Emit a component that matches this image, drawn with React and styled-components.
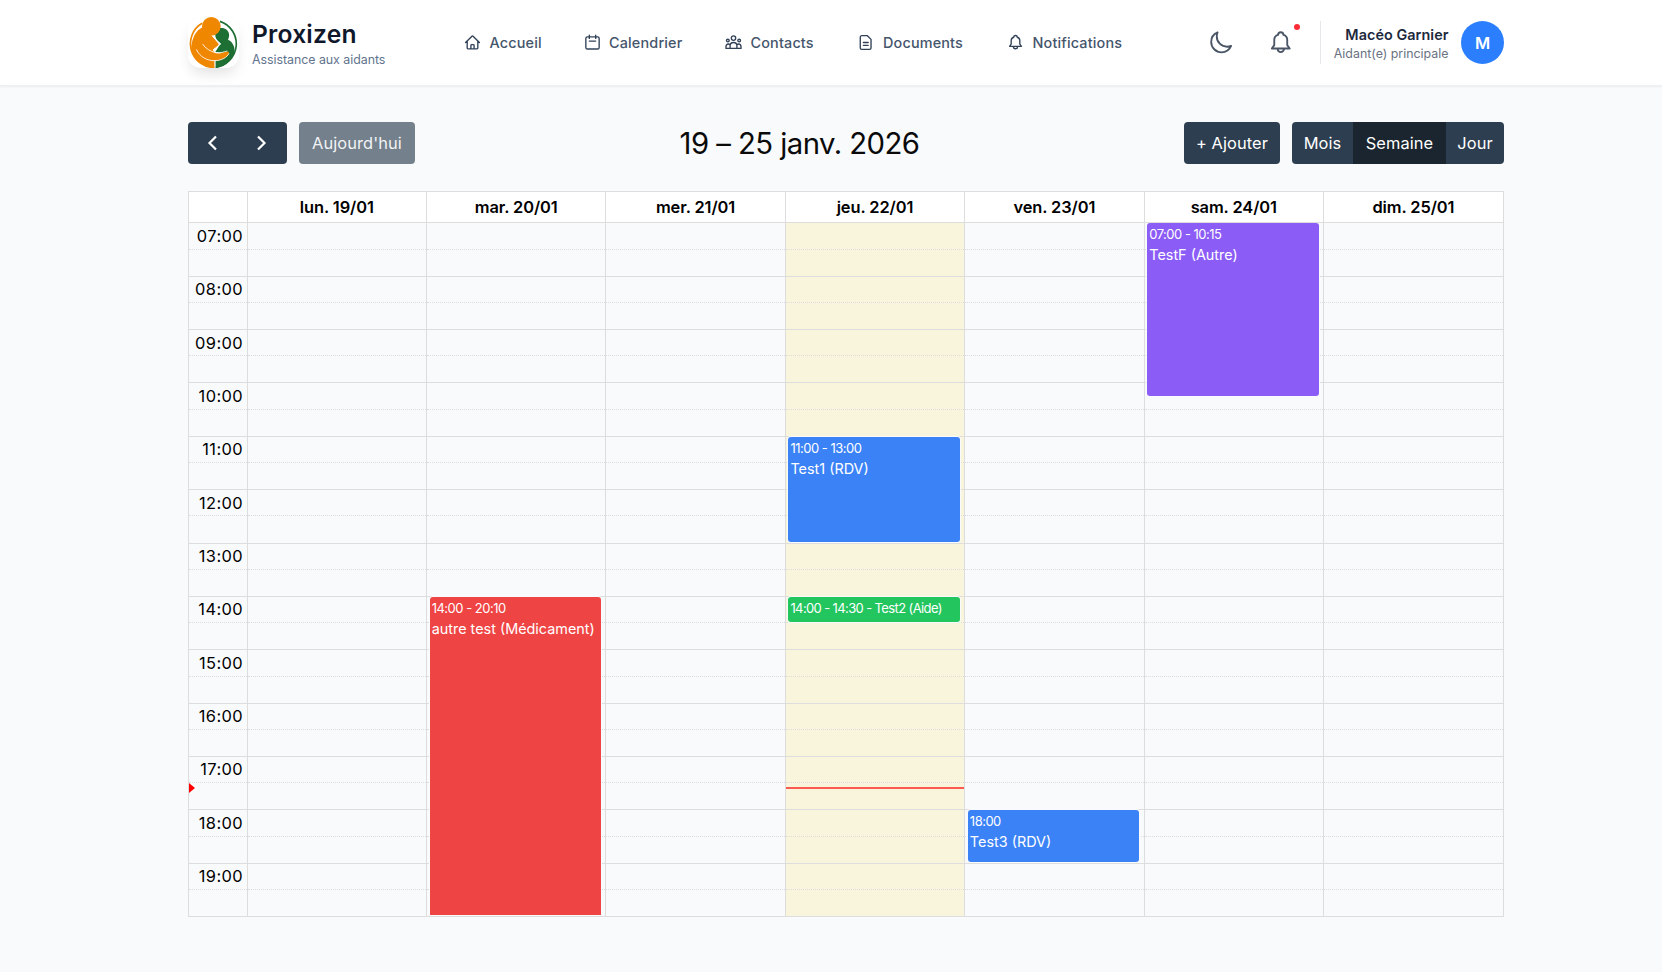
import styled, { createGlobalStyle } from "styled-components"
import { HiOutlineHome, HiOutlineMoon } from "react-icons/hi2"

const START_HOUR = 7
const END_HOUR = 20
const HOUR_HEIGHT = 53.36

const navItems = [
    { label: "Accueil", icon: HiOutlineHome, width: 119.5 },
    { label: "Calendrier", icon: CalendarIcon, width: 141.5 },
    { label: "Contacts", icon: GroupIcon, width: 132.5 },
    { label: "Documents", icon: DocumentIcon, width: 149.5 },
    { label: "Notifications", icon: BellIcon, width: 120 },
]

const days = [
    { label: "lun. 19/01", events: [] },
    {
        label: "mar. 20/01",
        events: [{ start: 14, end: 19.99, time: "14:00 - 20:10", title: "autre test (Médicament)", color: "#ef4444", cut: true }],
    },
    { label: "mer. 21/01", events: [] },
    {
        label: "jeu. 22/01",
        today: true,
        events: [
            { start: 11, end: 13, time: "11:00 - 13:00", title: "Test1 (RDV)", color: "#3b82f6" },
            { start: 14, end: 14.5, time: "14:00 - 14:30", title: "Test2 (Aide)", color: "#22c55e", short: true },
        ],
    },
    {
        label: "ven. 23/01",
        events: [{ start: 18, end: 19, time: "18:00", title: "Test3 (RDV)", color: "#3b82f6" }],
    },
    {
        label: "sam. 24/01",
        events: [{ start: 7, end: 10.25, time: "07:00 - 10:15", title: "TestF (Autre)", color: "#8b5cf6" }],
    },
    { label: "dim. 25/01", events: [] },
]

const hours = Array.from({ length: END_HOUR - START_HOUR }, (_, i) => START_HOUR + i)
const now = 17.57

const toY = (hour) => (hour - START_HOUR) * HOUR_HEIGHT

export default function App() {
    return (
        <>
            <GlobalStyle />
            <Header />
            <Main>
                <Toolbar />
                <WeekView />
            </Main>
        </>
    )
}

function Header() {
    return (
        <Topbar>
            <Brand>
                <LogoBox>
                    <Logo />
                </LogoBox>
                <div>
                    <BrandName>Proxizen</BrandName>
                    <BrandTag>Assistance aux aidants</BrandTag>
                </div>
            </Brand>
            <Nav>
                {navItems.map(({ label, icon: Icon, width }) => (
                    <NavItem key={label} $width={width}>
                        <Icon />
                        {label}
                    </NavItem>
                ))}
            </Nav>
            <IconButton>
                <HiOutlineMoon />
            </IconButton>
            <IconButton>
                <BellIcon />
                <Dot />
            </IconButton>
            <User>
                <div>
                    <UserName>Macéo Garnier</UserName>
                    <UserRole>Aidant(e) principale</UserRole>
                </div>
                <Avatar>M</Avatar>
            </User>
        </Topbar>
    )
}

function Toolbar() {
    return (
        <Tools>
            <ToolGroup>
                <Arrows>
                    <Chevron d="M10 2.5 L3.5 9 L10 15.5" />
                    <Chevron d="M3 2.5 L9.5 9 L3 15.5" />
                </Arrows>
                <Button $width={116} $disabled>Aujourd'hui</Button>
            </ToolGroup>
            <Title>19 – 25 janv. 2026</Title>
            <ToolGroup>
                <Button $width={96}>+ Ajouter</Button>
                <Segments>
                    <Segment $width={61}>Mois</Segment>
                    <Segment $width={93} $active>Semaine</Segment>
                    <Segment $width={58}>Jour</Segment>
                </Segments>
            </ToolGroup>
        </Tools>
    )
}

function WeekView() {
    return (
        <Calendar>
            <HeadRow>
                <HeadCell />
                {days.map((day) => (
                    <HeadCell key={day.label}>{day.label}</HeadCell>
                ))}
            </HeadRow>
            <Body>
                <Column>
                    {hours.map((hour) => (
                        <Hour key={hour}>
                            <HourLabel>{String(hour).padStart(2, "0")}:00</HourLabel>
                        </Hour>
                    ))}
                    <NowArrow style={{ top: toY(now) }} />
                </Column>
                {days.map((day) => (
                    <Column key={day.label} $today={day.today}>
                        {hours.map((hour) => (
                            <Hour key={hour} />
                        ))}
                        {day.events.map((event) => (
                            <Event
                                key={event.title}
                                $color={event.color}
                                $cut={event.cut}
                                style={{ top: toY(event.start) + 0.3, height: toY(event.end) - toY(event.start) - 1.2 }}
                            >
                                <EventTime $short={event.short}>
                                    {event.short ? `${event.time} - ${event.title}` : event.time}
                                </EventTime>
                                {!event.short && <EventTitle>{event.title}</EventTitle>}
                            </Event>
                        ))}
                        {day.today && <NowLine style={{ top: toY(now) }} />}
                    </Column>
                ))}
            </Body>
        </Calendar>
    )
}

function Chevron({ d }) {
    return (
        <svg width="14" height="18" viewBox="0 0 14 18" fill="none" stroke="white" strokeWidth="2.2">
            <path d={d} />
        </svg>
    )
}

function CalendarIcon() {
    return (
        <svg viewBox="0 0 24 24" fill="none" stroke="currentColor" strokeLinecap="round">
            <rect x="2.6" y="4" width="18.8" height="17.2" rx="2.2" />
            <path d="M7.5 1.8v4.4M16.5 1.8v4.4M7.5 10h9" />
        </svg>
    )
}

function GroupIcon() {
    return (
        <svg viewBox="0 0 24 24" fill="none" stroke="currentColor" strokeLinejoin="round">
            <circle cx="12" cy="5.8" r="3.1" />
            <circle cx="4" cy="9.3" r="1.9" />
            <circle cx="20" cy="9.3" r="1.9" />
            <path d="M7.2 20.4v-3.6a4.8 4.8 0 0 1 9.6 0v3.6z" />
            <path d="M7.2 20.4H1.4v-2.6c0-2.2 1.4-3.7 3.2-3.7 1 0 1.9.3 2.6 1.1" />
            <path d="M16.8 20.4h5.8v-2.6c0-2.2-1.4-3.7-3.2-3.7-1 0-1.9.3-2.6 1.1" />
        </svg>
    )
}

function DocumentIcon() {
    return (
        <svg viewBox="0 0 24 24" fill="none" stroke="currentColor" strokeLinecap="round" strokeLinejoin="round">
            <path d="M5.2 2.4h8l5.2 5.2v12a2 2 0 0 1-2 2H5.2a2 2 0 0 1-2-2V4.4a2 2 0 0 1 2-2z" />
            <path d="M7.6 12h6.8M7.6 16h6.8" />
        </svg>
    )
}

function BellIcon() {
    return (
        <svg viewBox="0 0 24 24" fill="none" stroke="currentColor" strokeLinejoin="round">
            <path d="M3.6 17.4h16.8l-2.3-3.2V9.4a4.9 4.9 0 0 0-3.6-4.8 2.5 2.5 0 0 0-5 0 4.9 4.9 0 0 0-3.6 4.8v4.8z" />
            <path d="M9 17.6a3 3.2 0 0 0 6 0" />
        </svg>
    )
}

function Logo() {
    return (
        <svg width="51" height="51" viewBox="24 51 153 153" fill="none">
            <path d="M120 64 A71 71 0 0 1 106 202" stroke="#1d6f33" strokeWidth="5" />
            <path d="M66 70 A71 71 0 0 0 104 202" stroke="#f08700" strokeWidth="5" />
            <path
                fill="#1d6f33"
                d="M106 98 C108 84 126 80 138 88 C150 97 149 110 144 119 C160 126 166 144 163 160 C152 186 130 202 106 204 L106 176 L132 158 L106 156 L122 130 C112 126 104 112 106 98 Z"
            />
            <path
                fill="#f08700"
                d="M68 82 C46 92 35 116 33 150 C42 184 72 204 104 204 L104 183 C122 182 146 172 147 158 C144 150 132 158 120 160 L106 159 L98 150 C108 142 116 138 116 132 L96 108 Z"
            />
            <circle cx="94" cy="79" r="28" fill="#f08700" />
            <path d="M68 132 C76 146 92 154 106 158 C120 162 132 154 142 153" stroke="white" strokeWidth="2.5" />
            <path d="M49 148 C60 172 82 182 104 182 C124 182 142 172 147 160" stroke="white" strokeWidth="2.5" />
            <path d="M97 108 L122 132 L100 149" stroke="white" strokeWidth="3" />
            <path d="M105 180 V204" stroke="white" strokeWidth="2.5" />
        </svg>
    )
}

const GlobalStyle = createGlobalStyle`
    * {
        box-sizing: border-box;
    }
    body {
        margin: 0;
        min-height: 972px;
        background-color: #f8fafc;
        color: #0a0a0a;
        font-family: Inter, "Liberation Sans", sans-serif;
    }
`
const Topbar = styled.header`
    height: 86px;
    padding-left: 188px;
    display: flex;
    align-items: center;
    background-color: white;
    border-bottom: 1px solid #edf0f3;
    box-shadow: 0 1px 2px rgba(0, 0, 0, 0.06);
`
const Brand = styled.div`
    width: 276px;
    display: flex;
    align-items: center;
    gap: 13px;
`
const LogoBox = styled.div`
    width: 51px;
    height: 51px;
    border-radius: 13px;
    overflow: hidden;
    background-color: white;
    box-shadow: 0 8px 14px -3px rgba(0, 0, 0, 0.12);
`
const BrandName = styled.div`
    padding-top: 4px;
    font-size: 24.6px;
    line-height: 29px;
    font-weight: 600;
    letter-spacing: 0.2px;
    color: #0f172b;
`
const BrandTag = styled.div`
    padding-top: 2px;
    font-size: 12.4px;
    line-height: 18px;
    letter-spacing: -0.04px;
    color: #62748e;
    white-space: nowrap;
`
const Nav = styled.nav`
    display: flex;
    width: 743.5px;
`
const NavItem = styled.a`
    width: ${(props) => props.$width}px;
    display: flex;
    align-items: center;
    gap: 8.5px;
    font-size: 14.4px;
    font-weight: 500;
    letter-spacing: 0.17px;
    white-space: nowrap;
    color: #45556c;

    svg {
        width: 17px;
        height: 17px;
        stroke-width: 1.9;
        color: #314158;
    }
`
const IconButton = styled.div`
    position: relative;
    width: 60.5px;
    padding-top: 1px;
    display: flex;
    color: #4a5565;

    svg {
        width: 25.5px;
        height: 25.5px;
        stroke-width: 1.75;
    }
`
const Dot = styled.span`
    position: absolute;
    top: -5.5px;
    left: 25.5px;
    width: 6.5px;
    height: 6.5px;
    border-radius: 50%;
    background-color: #fb2c36;
`
const User = styled.div`
    width: 184px;
    height: 43px;
    margin-left: -8.5px;
    display: flex;
    align-items: center;
    justify-content: flex-end;
    gap: 12.5px;
    text-align: right;
    border-left: 1px solid #e5e7eb;
    white-space: nowrap;
`
const UserName = styled.div`
    padding-top: 2px;
    font-size: 14.4px;
    line-height: 19px;
    font-weight: 600;
    letter-spacing: 0.05px;
    color: #1d293d;
`
const UserRole = styled.div`
    padding-top: 1px;
    font-size: 12.4px;
    line-height: 18px;
    color: #6a7282;
`
const Avatar = styled.div`
    width: 43px;
    height: 43px;
    border-radius: 50%;
    display: flex;
    align-items: center;
    justify-content: center;
    background-color: #2b7fff;
    color: white;
    font-size: 16.5px;
    font-weight: 600;
`
const Main = styled.main`
    width: 1316px;
    margin: 36px 0 0 188px;
`
const Tools = styled.div`
    height: 42px;
    margin-bottom: 27px;
    display: flex;
    align-items: center;
    justify-content: space-between;
`
const ToolGroup = styled.div`
    display: flex;
    gap: 12px;
`
const Button = styled.button`
    width: ${(props) => props.$width}px;
    height: 42px;
    padding: 0;
    border: none;
    border-radius: 4px;
    background-color: ${(props) => (props.$disabled ? "#74808b" : "#2c3e50")};
    color: ${(props) => (props.$disabled ? "#f1f3f5" : "white")};
    font-family: inherit;
    font-size: 16.4px;
    letter-spacing: 0.1px;
    white-space: nowrap;
`
const Arrows = styled.div`
    width: 99px;
    height: 42px;
    display: flex;
    align-items: center;
    justify-content: space-between;
    padding: 0 18px;
    border-radius: 4px;
    background-color: #2c3e50;
`
const Segments = styled.div`
    display: flex;
    overflow: hidden;
    border-radius: 4px;
`
const Segment = styled(Button)`
    border-radius: 0;
    background-color: ${(props) => (props.$active ? "#1a252f" : "#2c3e50")};
`
const Title = styled.h2`
    margin: 0;
    font-size: 29.3px;
    font-weight: 370;
    letter-spacing: -0.55px;
    white-space: nowrap;
`
const Calendar = styled.section`
    border: 1px solid #ddd;
`
const HeadRow = styled.div`
    height: 31px;
    display: grid;
    grid-template-columns: 57.6px repeat(6, 179.4px) 1fr;
    background-color: white;
    border-bottom: 1px solid #ddd;
`
const HeadCell = styled.div`
    display: flex;
    align-items: center;
    justify-content: center;
    font-size: 16.4px;
    font-weight: 600;
    letter-spacing: -0.08px;
    color: black;

    & + & {
        border-left: 1px solid #ddd;
    }
`
const Body = styled.div`
    display: grid;
    grid-template-columns: 57.6px repeat(6, 179.4px) 1fr;
`
const Column = styled.div`
    position: relative;
    height: 693px;
    overflow: hidden;
    background-color: ${(props) => (props.$today ? "#f9f5dd" : "transparent")};

    & + & {
        border-left: 1px solid #ddd;
    }
`
const Hour = styled.div`
    height: ${HOUR_HEIGHT}px;
    display: flex;
    flex-direction: column;

    &:first-child {
        height: ${HOUR_HEIGHT - 0.6}px;
    }
    & + & {
        border-top: 1px solid #ddd;
    }
    &::after {
        content: "";
        margin-top: auto;
        height: 26.1px;
        border-top: 1px dotted #ddd;
    }
`
const HourLabel = styled.span`
    height: 0;
    padding: 0.4px 3.6px 0 0;
    text-align: right;
    font-size: 16.4px;
    line-height: 24px;
    letter-spacing: 0.4px;
    color: black;

    ${Hour}:first-child & {
        padding-top: 1px;
    }
`
const Event = styled.div`
    position: absolute;
    left: 2.7px;
    right: 4.3px;
    padding: 2px;
    overflow: hidden;
    border-radius: ${(props) => (props.$cut ? "3px 3px 0 0" : "3px")};
    background-color: ${(props) => props.$color};
    box-shadow: 0 0 0 1px #f8fafc;
    color: white;
    white-space: nowrap;
`
const EventTime = styled.div`
    font-size: 13px;
    line-height: 19px;
    letter-spacing: ${(props) => (props.$short ? "-0.62px" : "-0.5px")};
`
const EventTitle = styled.div`
    font-size: 14.4px;
    line-height: 22.6px;
`
const NowLine = styled.div`
    position: absolute;
    left: 0;
    right: 0;
    height: 2px;
    background-color: #fb5a50;
`
const NowArrow = styled.div`
    position: absolute;
    left: 0;
    margin-top: -4.5px;
    border-style: solid;
    border-width: 5px 0 5px 6px;
    border-color: transparent transparent transparent red;
`
